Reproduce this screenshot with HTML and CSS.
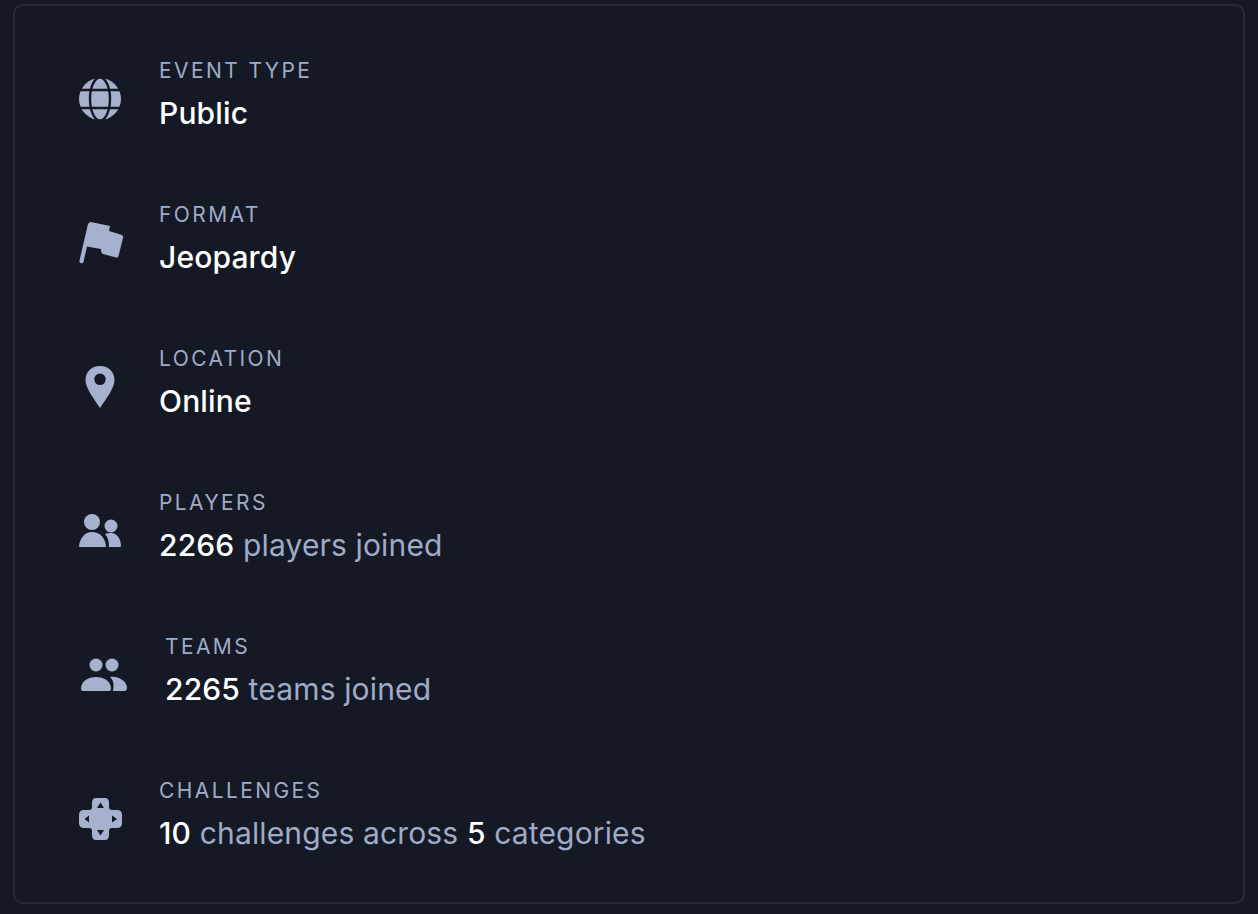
FILE: index.html
```html
<!DOCTYPE html>
<html lang="en">
<head>
  <meta charset="UTF-8">
  <title>Event details</title>
  <link rel="stylesheet" href="styles.css">
</head>
<body>
<div class="card">
  <div class="row">
    <svg class="icon" width="42" height="42" viewBox="0 0 42 42">
      <circle cx="21" cy="21" r="21" fill="#a5b1cd"/>
      <ellipse cx="21" cy="21" rx="10" ry="21.500" fill="none" stroke="#141925" stroke-width="2.400"/>
      <path d="M0 12H42M0 30H42" stroke="#141925" stroke-width="2.400"/>
    </svg>
    <div class="info">
      <div class="label">EVENT TYPE</div>
      <div class="value"><b>Public</b></div>
    </div>
  </div>
  <div class="row">
    <svg class="icon" width="42" height="42" viewBox="0 0 42 42">
      <path d="M12 0 L31 4 L30 9 L43 13 Q44.500 14 44 16 L39.500 34 Q39 36 37 35.500 L24 32 Q22 31.500 22 27 L8 24.500 L4.500 40 Q3.500 42 1.500 41 Q0 40 0.500 38.500 L9 2 Q10 0 12 0Z" fill="#a5b1cd"/>
    </svg>
    <div class="info">
      <div class="label">FORMAT</div>
      <div class="value"><b>Jeopardy</b></div>
    </div>
  </div>
  <div class="row">
    <svg class="icon" width="42" height="42" viewBox="0 0 42 42">
      <path fill-rule="evenodd" d="M21 0C29.500 0 35.500 6 35.500 14C35.500 22 27 33 21 42C15 33 6.500 22 6.500 14C6.500 6 12.500 0 21 0ZM21 7.500A5.800 5.800 0 1 0 21 19.100A5.800 5.800 0 1 0 21 7.500Z" fill="#a5b1cd"/>
    </svg>
    <div class="info">
      <div class="label">LOCATION</div>
      <div class="value"><b>Online</b></div>
    </div>
  </div>
  <div class="row">
    <svg class="icon" width="42" height="34" viewBox="0 0 42 34">
      <circle cx="13" cy="8" r="8" fill="#a5b1cd"/>
      <circle cx="32" cy="12" r="6.500" fill="#a5b1cd"/>
      <path d="M0 32C1 24 6 18 13 18C21 18 26 24 27 32Q27 33 26 33H1Q0 33 0 32Z" fill="#a5b1cd"/>
      <path d="M26 20C28 19 30 19 32 19C38 19 42 25 42 32Q42 33 41 33H30C30 28 29 23 26 20Z" fill="#a5b1cd"/>
    </svg>
    <div class="info">
      <div class="label">PLAYERS</div>
      <div class="value"><b>2266</b> players joined</div>
    </div>
  </div>
  <div class="row">
    <svg class="icon" width="48" height="34" viewBox="0 0 48 34">
      <circle cx="17" cy="7" r="6.500" fill="#a5b1cd"/>
      <circle cx="33" cy="7" r="6.500" fill="#a5b1cd"/>
      <path d="M2 31C2 23 9 19 17 19C25 19 32 23 32 31Q32 33 30 33H4Q2 33 2 31Z" fill="#a5b1cd"/>
      <path d="M31 19C39 18 48 23 48 30Q48 33 45 33H34C35 27 35 23 31 19Z" fill="#a5b1cd"/>
    </svg>
    <div class="info">
      <div class="label">TEAMS</div>
      <div class="value"><b>2265</b> teams joined</div>
    </div>
  </div>
  <div class="row">
    <svg class="icon" width="42" height="42" viewBox="0 0 42 42">
      <path fill-rule="evenodd" d="M17 0H26Q30 0 30 5V9Q30 12 33 12H38Q43 12 43 17V25Q43 30 38 30H33Q30 30 30 33V37Q30 42 26 42H17Q13 42 13 37V33Q13 30 10 30H5Q0 30 0 25V17Q0 12 5 12H10Q13 12 13 9V5Q13 0 17 0ZM21.500 4.500L18 10H25ZM21.500 37.500L25 32H18ZM5.500 21L10 24.500V17.500ZM38 21L33 17.500V24.500Z" fill="#a5b1cd"/>
    </svg>
    <div class="info">
      <div class="label">CHALLENGES</div>
      <div class="value"><b>10</b> challenges across <b>5</b> categories</div>
    </div>
  </div>
</div>
</body>
</html>
```

FILE: styles.css
```css
html, body { margin: 0; height: 100%; }
body { background: #141925; color: #a0abc5; font-family: Inter, "Liberation Sans", sans-serif; overflow: hidden; }
.card { box-sizing: border-box; height: 900px; margin: 4px 13px 0; border: 2px solid #252b3a; border-radius: 10px; padding: 52px 64px 0; display: flex; flex-direction: column; gap: 71px; }
.row { display: flex; align-items: center; gap: 38px; height: 73px; }
.icon { flex: none; margin-top: 9px; overflow: visible; }
.info { display: flex; flex-direction: column; gap: 11px; }
.label { font-size: 21px; line-height: 26px; letter-spacing: 2.400px; }
.value { font-size: 30px; line-height: 36px; letter-spacing: 0.150px; white-space: nowrap; }
.value b { color: #fff; font-weight: 500; }
```
